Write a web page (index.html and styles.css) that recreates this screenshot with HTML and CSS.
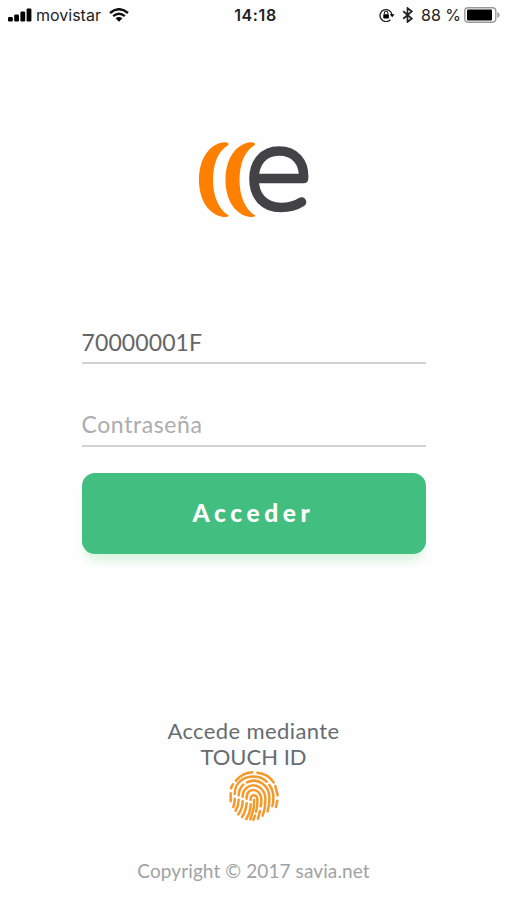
FILE: index.html
```html
<!DOCTYPE html>
<html lang="es">
<head>
    <meta charset="UTF-8">
    <meta name="viewport" content="width=device-width, initial-scale=1.0">
    <title>Acceder</title>
    <link rel="stylesheet" href="styles.css">
</head>
<body>
    <!-- Status bar -->
    <header class="status-bar">
        <div class="status-left">
            <svg class="signal" width="25" height="14" viewBox="0 0 25 14">
                <rect x="0" y="9" width="4.8" height="4.5" rx="1.2"/>
                <rect x="6.2" y="6.5" width="4.8" height="7" rx="1.2"/>
                <rect x="12.4" y="3.5" width="4.8" height="10" rx="1.2"/>
                <rect x="18.6" y="0.5" width="4.8" height="13" rx="1.2"/>
            </svg>
            <span class="carrier">movistar</span>
            <svg class="wifi" width="20" height="14" viewBox="0 0 20 14">
                <path d="M1 5Q10-2.6 19 5M4.2 8.2Q10 3.4 15.8 8.2" fill="none" stroke="#111" stroke-width="2.4"/>
                <path d="M6.6 10.3Q10 7.6 13.4 10.3L10 13.8Z"/>
            </svg>
        </div>
        <span class="clock">14:18</span>
        <div class="status-right">
            <svg class="lock" width="16" height="14" viewBox="0 0 16 14">
                <path d="M11.5 11.6A6 6 0 1 1 13 7" fill="none" stroke="#222" stroke-width="1.3"/>
                <path d="M10.8 6.2H15.5L13.2 9.2Z"/>
                <rect x="4.3" y="6.2" width="5.6" height="4.2" rx=".6"/>
                <path d="M5.4 6.5V5a1.7 1.7 0 0 1 3.4 0v1.5" fill="none" stroke="#222" stroke-width="1.1"/>
            </svg>
            <svg class="bluetooth" width="11" height="16" viewBox="0 0 10 15">
                <path d="M1 4L9 10.8L5 14V1L9 4.2L1 11" fill="none" stroke="#222" stroke-width="1.6"/>
            </svg>
            <span class="percent">88 %</span>
            <svg class="battery" width="36" height="16" viewBox="0 0 36 16">
                <rect x=".8" y=".8" width="31" height="14.4" rx="3.4" fill="#fff" stroke="#999" stroke-width="1.4"/>
                <rect x="3" y="2.5" width="25" height="11" rx="1" fill="#000"/>
                <path d="M33.4 5Q35.6 6 35.6 8T33.4 11Z" fill="#999"/>
            </svg>
        </div>
    </header>

    <main class="login">
        <svg class="logo" width="118" height="84" viewBox="195 138 118 84">
            <g fill="#ff7f00">
                <path id="wave" d="M228 143Q226 141.800 222 142.500C206 146 199 163 199 180C199 198 207 213 221 216.500Q227 217.800 229 215.800C218 209 213 195 213 180C213 164 218 151 228 145.200Q229.200 144 228 143Z"/>
                <use href="#wave" x="26.500"/>
            </g>
            <path d="M256 178.500H303.500C304.500 162 295 151 279 151C263 151 254 163 254 179C254 196 264 207.500 281 207.500C290 207.500 296 205.500 301.500 202" fill="none" stroke="#434246" stroke-width="9.600" stroke-linecap="round" stroke-linejoin="round"/>
        </svg>

        <form class="login-form">
            <input class="field" type="text" value="70000001F" aria-label="Usuario">
            <input class="field" type="password" placeholder="Contraseña">
            <button class="submit" type="button">Acceder</button>
        </form>

        <!-- Touch ID access -->
        <div class="touch-id">
            <p><span class="touch-lead">Accede mediante</span><br>TOUCH ID</p>
            <svg class="fingerprint" width="50" height="50" viewBox="26 28 150 150">
                <g fill="none" stroke="#f39a2d" stroke-width="7.500" stroke-linecap="round">
                    <path d="M47 57Q66 34 96 32M111 33Q143 36 160 62M165 73L172 101"/>
                    <path d="M32 80Q34 73 38 68M31 95V119M171 117L167 136"/>
                    <path d="M43 97Q43 70 64 55Q84 42 108 45Q126 47 139 60M147 70Q158 83 159 105Q160 121 156 133M43 111Q44 122 39 136"/>
                    <path d="M55 101Q56 81 69 69M80 62Q104 50 127 66Q146 80 147 106Q148 127 142 149M55 114Q55 132 46 147"/>
                    <path d="M67 105Q67 87 79 78Q99 64 119 78Q134 89 135 109Q136 139 127 162M67 119Q67 140 54 158"/>
                    <path d="M79 111Q78 96 87 89Q98 81 110 88Q122 96 123 112Q124 123 121 134M79 125Q77 148 65 166M119 148L113 171"/>
                    <path d="M91 114C90 95 111 97 111 114Q112 134 107 150M91 128Q90 153 78 172M104 162L99 174"/>
                    <path d="M101 115Q102 140 95 157L90 173"/>
                </g>
            </svg>
        </div>
    </main>

    <footer class="copyright">Copyright © 2017 savia.net</footer>
</body>
</html>
```
FILE: styles.css
```css
* {
    box-sizing: border-box;
}

body {
    display: flex;
    flex-direction: column;
    align-items: center;
    height: 900px;
    margin: 0;
    background: #fefefe;
    font-family: 'Lato', sans-serif;
    color: #666c6f;
    overflow: hidden;
}

/* Status bar */
.status-bar {
    display: grid;
    grid-template-columns: 1fr auto 1fr;
    align-items: center;
    width: 100%;
    height: 30px;
    padding: 0 7px 0 8px;
    font-family: 'Inter', sans-serif;
    font-size: 16px;
    color: #222;
}

.status-left,
.status-right {
    display: flex;
    align-items: center;
}

.status-right {
    justify-content: flex-end;
}

.carrier {
    margin: 0 8px 0 3px;
}

.clock {
    padding-left: 3px;
    font-weight: 600;
    letter-spacing: 0.6px;
}

.bluetooth {
    margin: 0 8px 0 7px;
}

.percent {
    margin-right: 3px;
    white-space: nowrap;
}

/* Login */
.login {
    display: flex;
    flex-direction: column;
    align-items: center;
    width: 344px;
    padding-top: 108px;
}

.logo {
    display: block;
}

.login-form {
    display: flex;
    flex-direction: column;
    width: 100%;
    margin-top: 99px;
}

.field {
    width: 100%;
    height: 43px;
    margin: 0 0 39px;
    padding: 0;
    border: none;
    border-bottom: 2px solid #d2d2d2;
    border-radius: 0;
    background: transparent;
    font-family: inherit;
    font-size: 23px;
    letter-spacing: 0.1px;
    color: #656567;
    outline: none;
}

.field[type="password"] {
    height: 44px;
    margin-bottom: 26px;
    letter-spacing: 0.6px;
}

.field::placeholder {
    color: #acacae;
    opacity: 1;
}

.submit {
    height: 81px;
    padding: 0 0 3px;
    border: none;
    border-radius: 13px;
    background: #42bf80;
    box-shadow: 0 10px 10px -3px rgba(90, 210, 120, 0.22);
    font-family: inherit;
    font-size: 24.5px;
    font-weight: 900;
    letter-spacing: 4.6px;
    color: #fff;
}

/* Touch ID */
.touch-id {
    display: flex;
    flex-direction: column;
    align-items: center;
    margin-top: 164px;
}

.touch-id p {
    margin: 0;
    font-size: 22px;
    line-height: 26px;
    text-align: center;
}

.touch-lead {
    letter-spacing: 0.4px;
}

.fingerprint {
    display: block;
    margin-top: 1px;
}

.copyright {
    margin-top: 38px;
    font-size: 19px;
    line-height: 24px;
    letter-spacing: 0.1px;
    color: #a0a2a4;
}
```
